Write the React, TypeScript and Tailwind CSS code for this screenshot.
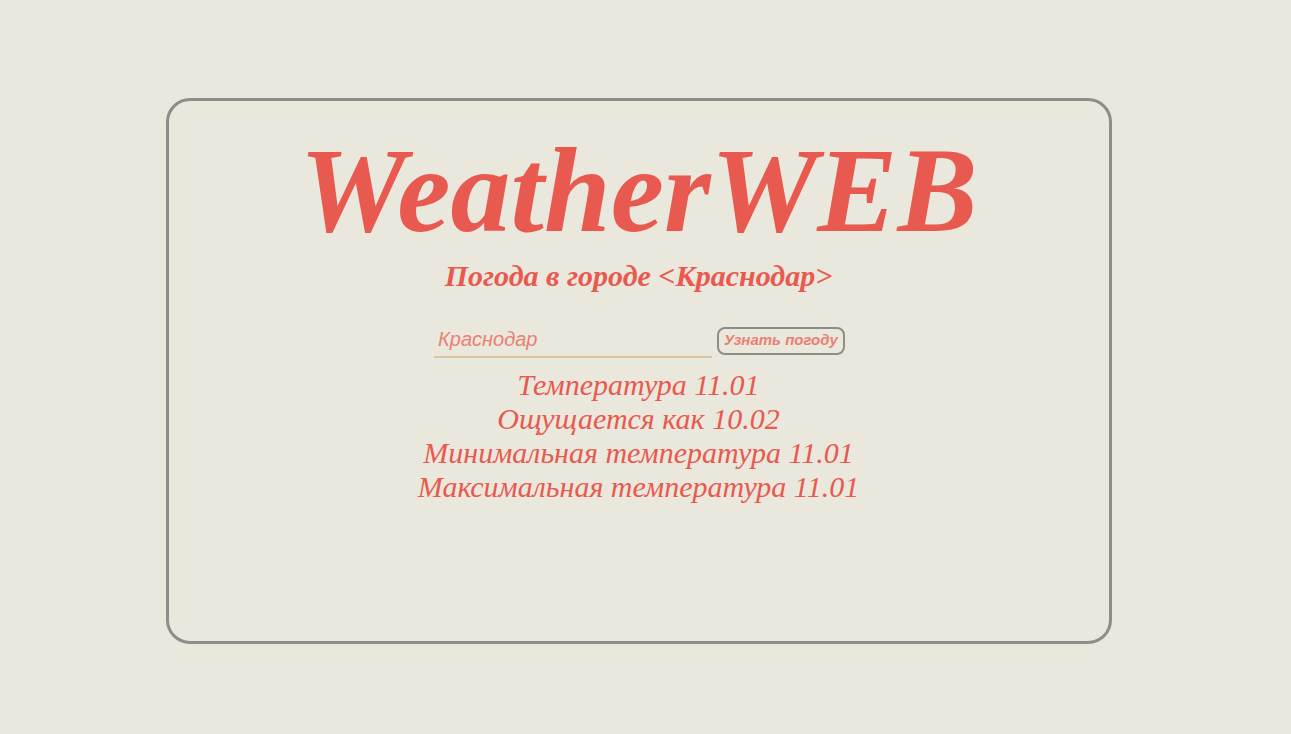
export default function App() {
  return (
    <div className="w-full h-[734px] bg-[#eae7dc] flex justify-center items-start pt-[98px] pr-[14px]">
      <div className="w-[946px] h-[546px] border-[3px] border-[#8e8d8a] rounded-[24px] flex flex-col items-center pt-[30px] font-['Liberation_Serif','Times_New_Roman',serif] text-[#e85a4f]">
        <h1 className="text-[120px] leading-[120px] font-bold italic">WeatherWEB</h1>
        <h2 className="text-[30px] leading-[34px] font-bold italic mt-[8px]">
          Погода в городе &lt;Краснодар&gt;
        </h2>
        <div className="flex items-center gap-[5px] mt-[30px] ml-[2px]">
          <input
            className="w-[278px] h-[35px] bg-transparent border-b-2 border-[#d8c3a5] outline-none px-[4px] text-[20px] italic text-[#e98074] placeholder:text-[#e98074] font-['Liberation_Sans',Arial,sans-serif]"
            placeholder="Краснодар"
          />
          <button className="w-[128px] h-[28px] border-2 border-[#8e8d8a] rounded-[8px] text-[15px] font-bold italic text-[#e98074] font-['Liberation_Sans',Arial,sans-serif] flex items-center justify-center">
            Узнать погоду
          </button>
        </div>
        <div className="flex flex-col items-center text-[30px] leading-[34px] italic mt-[10px]">
          <p>Температура 11.01</p>
          <p>Ощущается как 10.02</p>
          <p>Минимальная температура 11.01</p>
          <p>Максимальная температура 11.01</p>
        </div>
      </div>
    </div>
  );
}
